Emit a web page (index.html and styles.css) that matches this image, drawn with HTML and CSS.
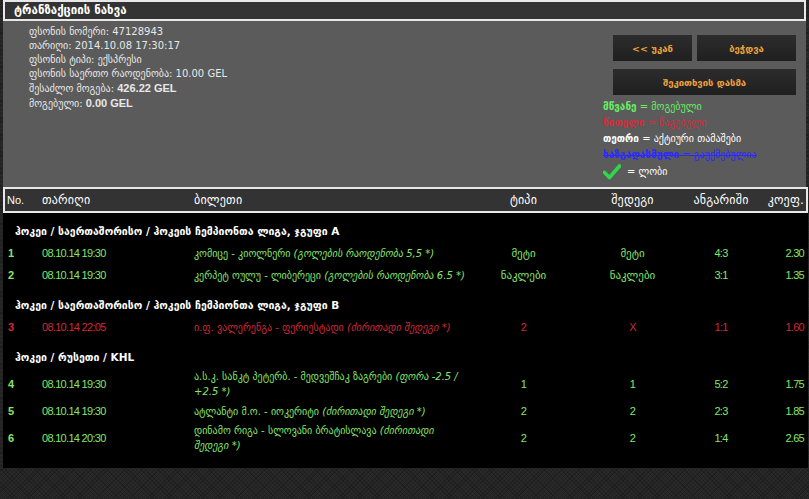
FILE: index.html
```html
<!DOCTYPE html>
<html lang="ka">
<head>
<meta charset="utf-8">
<title>ტრანზაქციის ნახვა</title>
<link rel="stylesheet" href="styles.css">
</head>
<body>
<div class="panel">
  <div class="titlebar">ტრანზაქციის ნახვა</div>
  <div class="top">
    <div class="info">
      <div>ფსონის ნომერი: 47128943</div>
      <div>თარიღი: 2014.10.08 17:30:17</div>
      <div>ფსონის ტიპი: ექსპრესი</div>
      <div>ფსონის საერთო რაოდენობა: 10.00 GEL</div>
      <div>შესაძლო მოგება: <b>426.22 GEL</b></div>
      <div>მოგებული: <b>0.00 GEL</b></div>
    </div>
    <div class="side">
      <div class="btns">
        <button class="btn btn-back">&lt;&lt; უკან</button>
        <button class="btn btn-print">ბეჭდვა</button>
        <button class="btn btn-ask">შეკითხვის დასმა</button>
      </div>
      <div class="legend">
        <div class="lg-green"><b>მწვანე</b> = მოგებული</div>
        <div class="lg-red"><b>წითელი</b> = წაგებული</div>
        <div class="lg-white"><b>თეთრი</b> = აქტიური თამაშები</div>
        <div class="lg-blue"><b>ხაზგადასმული</b> = გაუქმებულია</div>
        <div class="lg-check"><svg class="check" width="18" height="16" viewBox="0 0 18 16"><path d="M1.5 8.5 L6.5 13.5 L16.5 2" fill="none" stroke="#2fd84a" stroke-width="3.6" stroke-linecap="round" stroke-linejoin="round"/></svg><span>= ლობი</span></div>
      </div>
    </div>
  </div>
  <table class="bets">
    <colgroup>
      <col class="c-no"><col class="c-date"><col class="c-ticket"><col class="c-type"><col class="c-res"><col class="c-score"><col class="c-coef">
    </colgroup>
    <thead>
      <tr>
        <th class="l no-h">No.</th>
        <th class="l">თარიღი</th>
        <th class="l">ბილეთი</th>
        <th>ტიპი</th>
        <th>შედეგი</th>
        <th>ანგარიში</th>
        <th class="r">კოეფ.</th>
      </tr>
    </thead>
    <tbody>
      <tr class="group first"><td colspan="7">ჰოკეი / საერთაშორისო / ჰოკეის ჩემპიონთა ლიგა, ჯგუფი A</td></tr>
      <tr class="row win">
        <td class="no">1</td><td class="num">08.10.14 19:30</td>
        <td class="ticket">კომიცე - კიოლნერი <i>(გოლების რაოდენობა 5,5 *)</i></td>
        <td class="c ge">მეტი</td><td class="c ge">მეტი</td><td class="c num">4:3</td><td class="r num">2.30</td>
      </tr>
      <tr class="row win">
        <td class="no">2</td><td class="num">08.10.14 19:30</td>
        <td class="ticket">კერპეტ ოულუ - ლიბერეცი <i>(გოლების რაოდენობა 6.5 *)</i></td>
        <td class="c ge">ნაკლები</td><td class="c ge">ნაკლები</td><td class="c num">3:1</td><td class="r num">1.35</td>
      </tr>
      <tr class="group"><td colspan="7">ჰოკეი / საერთაშორისო / ჰოკეის ჩემპიონთა ლიგა, ჯგუფი B</td></tr>
      <tr class="row lose">
        <td class="no">3</td><td class="num">08.10.14 22:05</td>
        <td class="ticket">ი.ფ. ვალერენგა - ფერიესტადი <i>(ძირითადი შედეგი *)</i></td>
        <td class="c num">2</td><td class="c num">X</td><td class="c num">1:1</td><td class="r num">1.60</td>
      </tr>
      <tr class="group"><td colspan="7">ჰოკეი / რუსეთი / KHL</td></tr>
      <tr class="row win">
        <td class="no">4</td><td class="num">08.10.14 19:30</td>
        <td class="ticket">ა.ს.კ. სანკტ პეტერბ. - მედვეშჩაკ ზაგრები <i>(ფორა -2.5 /</i><br><i>+2.5 *)</i></td>
        <td class="c num">1</td><td class="c num">1</td><td class="c num">5:2</td><td class="r num">1.75</td>
      </tr>
      <tr class="row win">
        <td class="no">5</td><td class="num">08.10.14 19:30</td>
        <td class="ticket">ატლანტი მ.ო. - იოკერიტი <i>(ძირითადი შედეგი *)</i></td>
        <td class="c num">2</td><td class="c num">2</td><td class="c num">2:3</td><td class="r num">1.85</td>
      </tr>
      <tr class="row win">
        <td class="no">6</td><td class="num">08.10.14 20:30</td>
        <td class="ticket">დინამო რიგა - სლოვანი ბრატისლავა <i>(ძირითადი</i><br><i>შედეგი *)</i></td>
        <td class="c num">2</td><td class="c num">2</td><td class="c num">1:4</td><td class="r num">2.65</td>
      </tr>
      <tr class="spacer"><td colspan="7"></td></tr>
    </tbody>
  </table>
</div>
</body>
</html>
```

FILE: styles.css
```css
html, body {
  margin: 0;
  padding: 0;
}
body {
  width: 809px;
  height: 499px;
  overflow: hidden;
  background-color: #292929;
  background-image:
    repeating-linear-gradient(45deg, rgba(0,0,0,0.18) 0 1px, transparent 1px 3px),
    repeating-linear-gradient(-45deg, rgba(0,0,0,0.18) 0 1px, transparent 1px 3px);
  font-family: "Liberation Sans", "DejaVu Sans", sans-serif;
  font-size: 11px;
  color: #e6e6e6;
}
.panel {
  width: 803px;
  margin-left: 3px;
}
.titlebar {
  height: 17px;
  line-height: 17px;
  border: 2px solid #e8e8e8;
  background: #333;
  color: #fff;
  font-family: "DejaVu Sans", sans-serif;
  font-weight: bold;
  font-size: 11.5px;
  padding-left: 9px;
}
.top {
  display: flex;
  background: #5b5b5b;
  height: 166px;
}
.info {
  flex: 1;
  padding: 4px 0 0 26px;
  line-height: 14px;
  font-family: "DejaVu Sans", sans-serif;
  font-size: 10px;
  color: #e8e8e8;
}
.info b {
  font-family: "Liberation Sans", sans-serif;
  font-size: 11px;
}
.side {
  width: 203px;
  padding-top: 14px;
}
.btns {
  display: grid;
  grid-template-columns: 79px 99px;
  column-gap: 5px;
  row-gap: 8px;
  padding-left: 10px;
}
.btn {
  height: 26px;
  border: 0;
  padding: 0;
  background: linear-gradient(#2c2c2c, #1f1f1f);
  color: #f0a33c;
  font-family: "DejaVu Sans", sans-serif;
  font-weight: bold;
  font-size: 9.5px;
}
.btn-ask {
  grid-column: 1 / span 2;
}
.legend {
  margin-top: 4px;
  font-family: "DejaVu Sans", sans-serif;
  font-size: 10px;
  line-height: 16px;
}
.lg-green { color: #66f062; }
.lg-red { color: #cf2e3c; }
.lg-white { color: #ffffff; }
.lg-blue { color: #2a2aff; text-decoration: line-through; }
.lg-check {
  display: flex;
  align-items: center;
  gap: 6px;
  color: #fff;
  height: 18px;
}
.bets {
  width: 803px;
  border-collapse: collapse;
  table-layout: fixed;
  background: #000;
}
.c-no { width: 38px; }
.c-date { width: 152px; }
.c-ticket { width: 277px; }
.c-type { width: 105px; }
.c-res { width: 113px; }
.c-score { width: 64px; }
.c-coef { width: 54px; }
.bets thead tr {
  background: #333;
}
.bets th {
  height: 22px;
  padding: 0;
  font-family: "DejaVu Sans", sans-serif;
  font-weight: normal;
  font-size: 12px;
  letter-spacing: 0.2px;
  color: #fff;
  text-align: center;
  border-top: 2px solid #e8e8e8;
  border-bottom: 2px solid #e8e8e8;
}
.bets th.no-h {
  font-family: "Liberation Sans", sans-serif;
  font-size: 11px;
  letter-spacing: 0;
}
.bets th:first-child { border-left: 2px solid #e8e8e8; padding-left: 2px; }
.bets th:last-child { border-right: 2px solid #e8e8e8; padding-right: 2px; }
.bets th.l { text-align: left; }
.bets th.r { text-align: right; }
.bets td {
  padding: 1px 0;
  line-height: 15px;
  vertical-align: middle;
}
.row td { height: 20px; }
.row td:first-child { padding-left: 4px; }
.row td:last-child { padding-right: 3px; }
.row .no { font-weight: bold; }
.row .num {
  font-family: "Liberation Sans", sans-serif;
  font-size: 11px;
  letter-spacing: -0.7px;
}
.row .ticket {
  font-family: "DejaVu Sans", sans-serif;
  font-size: 10px;
  padding-right: 4px;
}
.row .c { text-align: center; }
.row .ge {
  font-family: "DejaVu Sans", sans-serif;
  font-size: 11px;
}
.row .r { text-align: right; }
.win td { color: #86e56c; }
.lose td { color: #d02a3a; }
.group td {
  height: 14px;
  padding: 12px 0 4px 11px;
  line-height: 14px;
  font-family: "DejaVu Sans", sans-serif;
  font-weight: bold;
  font-size: 10.5px;
  color: #fff;
}
.group.first td { padding-top: 11px; }
.spacer td { height: 14px; padding: 0; }
```
